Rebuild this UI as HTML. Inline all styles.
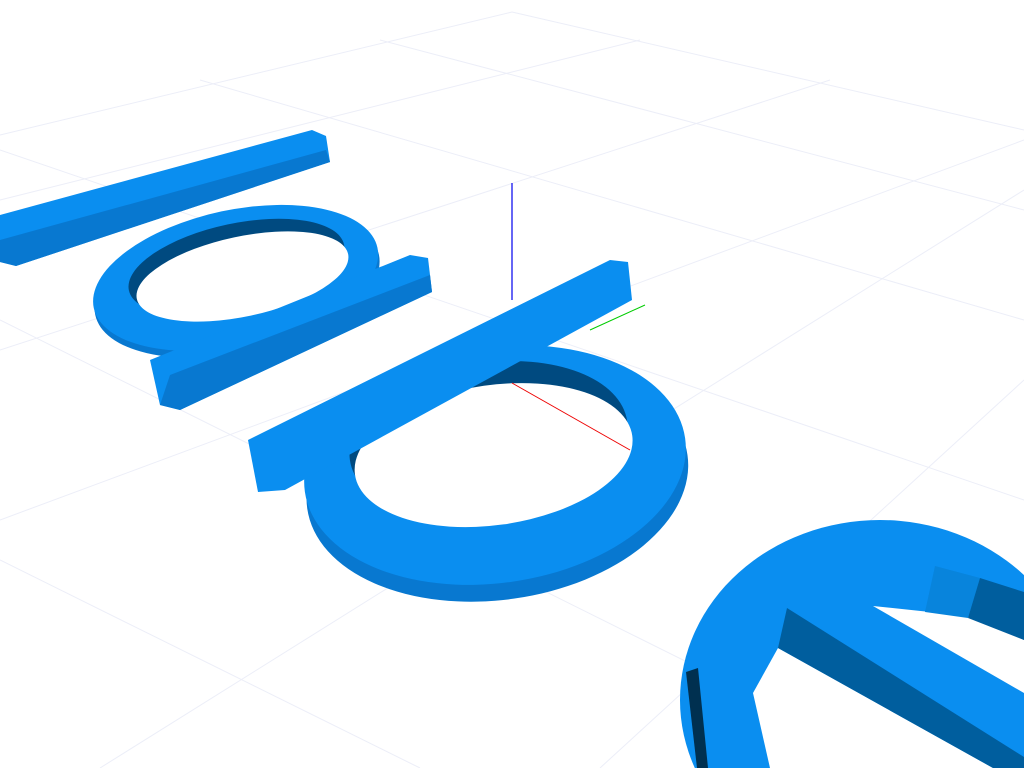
<!DOCTYPE html>
<html><head><meta charset="utf-8"><style>html,body{margin:0;padding:0;background:#fff;width:1024px;height:768px;overflow:hidden}svg{display:block;overflow:hidden}</style></head>
<body>
<svg width="1024" height="768" viewBox="0 0 1024 768" xmlns="http://www.w3.org/2000/svg">
<g stroke="#eceef8" stroke-width="1" fill="none">
<line x1="0" y1="135" x2="512" y2="12"/><line x1="512" y1="12" x2="1024" y2="130"/>
<line x1="0" y1="200" x2="640" y2="40"/><line x1="380" y1="40" x2="1024" y2="210"/>
<line x1="0" y1="350" x2="830" y2="80"/><line x1="200" y1="80" x2="1024" y2="320"/>
<line x1="0" y1="520" x2="1024" y2="140"/><line x1="0" y1="150" x2="1024" y2="500"/>
<line x1="100" y1="768" x2="1024" y2="190"/><line x1="0" y1="320" x2="900" y2="768"/>
<line x1="600" y1="768" x2="1024" y2="380"/><line x1="0" y1="560" x2="420" y2="768"/>
</g>
<polygon points="0,215 312,130 326,136 330,162 16,266 0,262" fill="#0a8ef0"/>
<polygon points="0,240 326,150 330,162 16,266 0,262" fill="#0878d0"/>
<g transform="rotate(-12 235 275)">
<ellipse cx="235" cy="285" rx="145" ry="68" fill="#0878d0"/>
<ellipse cx="235" cy="278" rx="145" ry="68" fill="#0a8ef0"/>
<ellipse cx="238" cy="268" rx="110" ry="44" fill="#004a80"/>
<ellipse cx="242" cy="278" rx="108" ry="40" fill="#fff"/>
</g>
<polygon points="150,360 410,255 428,258 432,292 180,410 160,405" fill="#0a8ef0"/>
<polygon points="170,375 430,275 432,292 180,410 160,405" fill="#0878d0"/>
<g transform="rotate(-8 495 465)">
<ellipse cx="495" cy="482" rx="192" ry="118" fill="#0878d0"/>
<ellipse cx="495" cy="465" rx="192" ry="118" fill="#0a8ef0"/>
<ellipse cx="492" cy="440" rx="140" ry="78" fill="#004a80"/>
<ellipse cx="495" cy="455" rx="140" ry="70" fill="#fff"/>
</g>
<polygon points="248,440 610,260 628,262 632,300 285,490 258,492" fill="#0a8ef0"/>
<ellipse cx="880" cy="700" rx="200" ry="180" fill="#0a8ef0"/>
<polygon points="686,672 697,768 708,768 698,668" fill="#003050"/>
<polygon points="778,648 753,693 770,768 993,768" fill="#fff"/>
<polygon points="787,608 1024,757 1024,768 993,768 778,648" fill="#005e9e"/>
<polygon points="873,606 1024,693 1024,640 980,618 930,612" fill="#fff"/>
<polygon points="935,566 980,578 968,618 925,612" fill="#0884dc"/>
<polygon points="980,578 1024,592 1024,640 968,618" fill="#005e9e"/>
<line x1="512" y1="183" x2="512" y2="300" stroke="#0000ee" stroke-width="1.2"/>
<line x1="590" y1="330" x2="645" y2="305" stroke="#00cc00" stroke-width="1"/>
<line x1="512" y1="383" x2="630" y2="450" stroke="#ee0000" stroke-width="1"/>
</svg>
</body></html>
